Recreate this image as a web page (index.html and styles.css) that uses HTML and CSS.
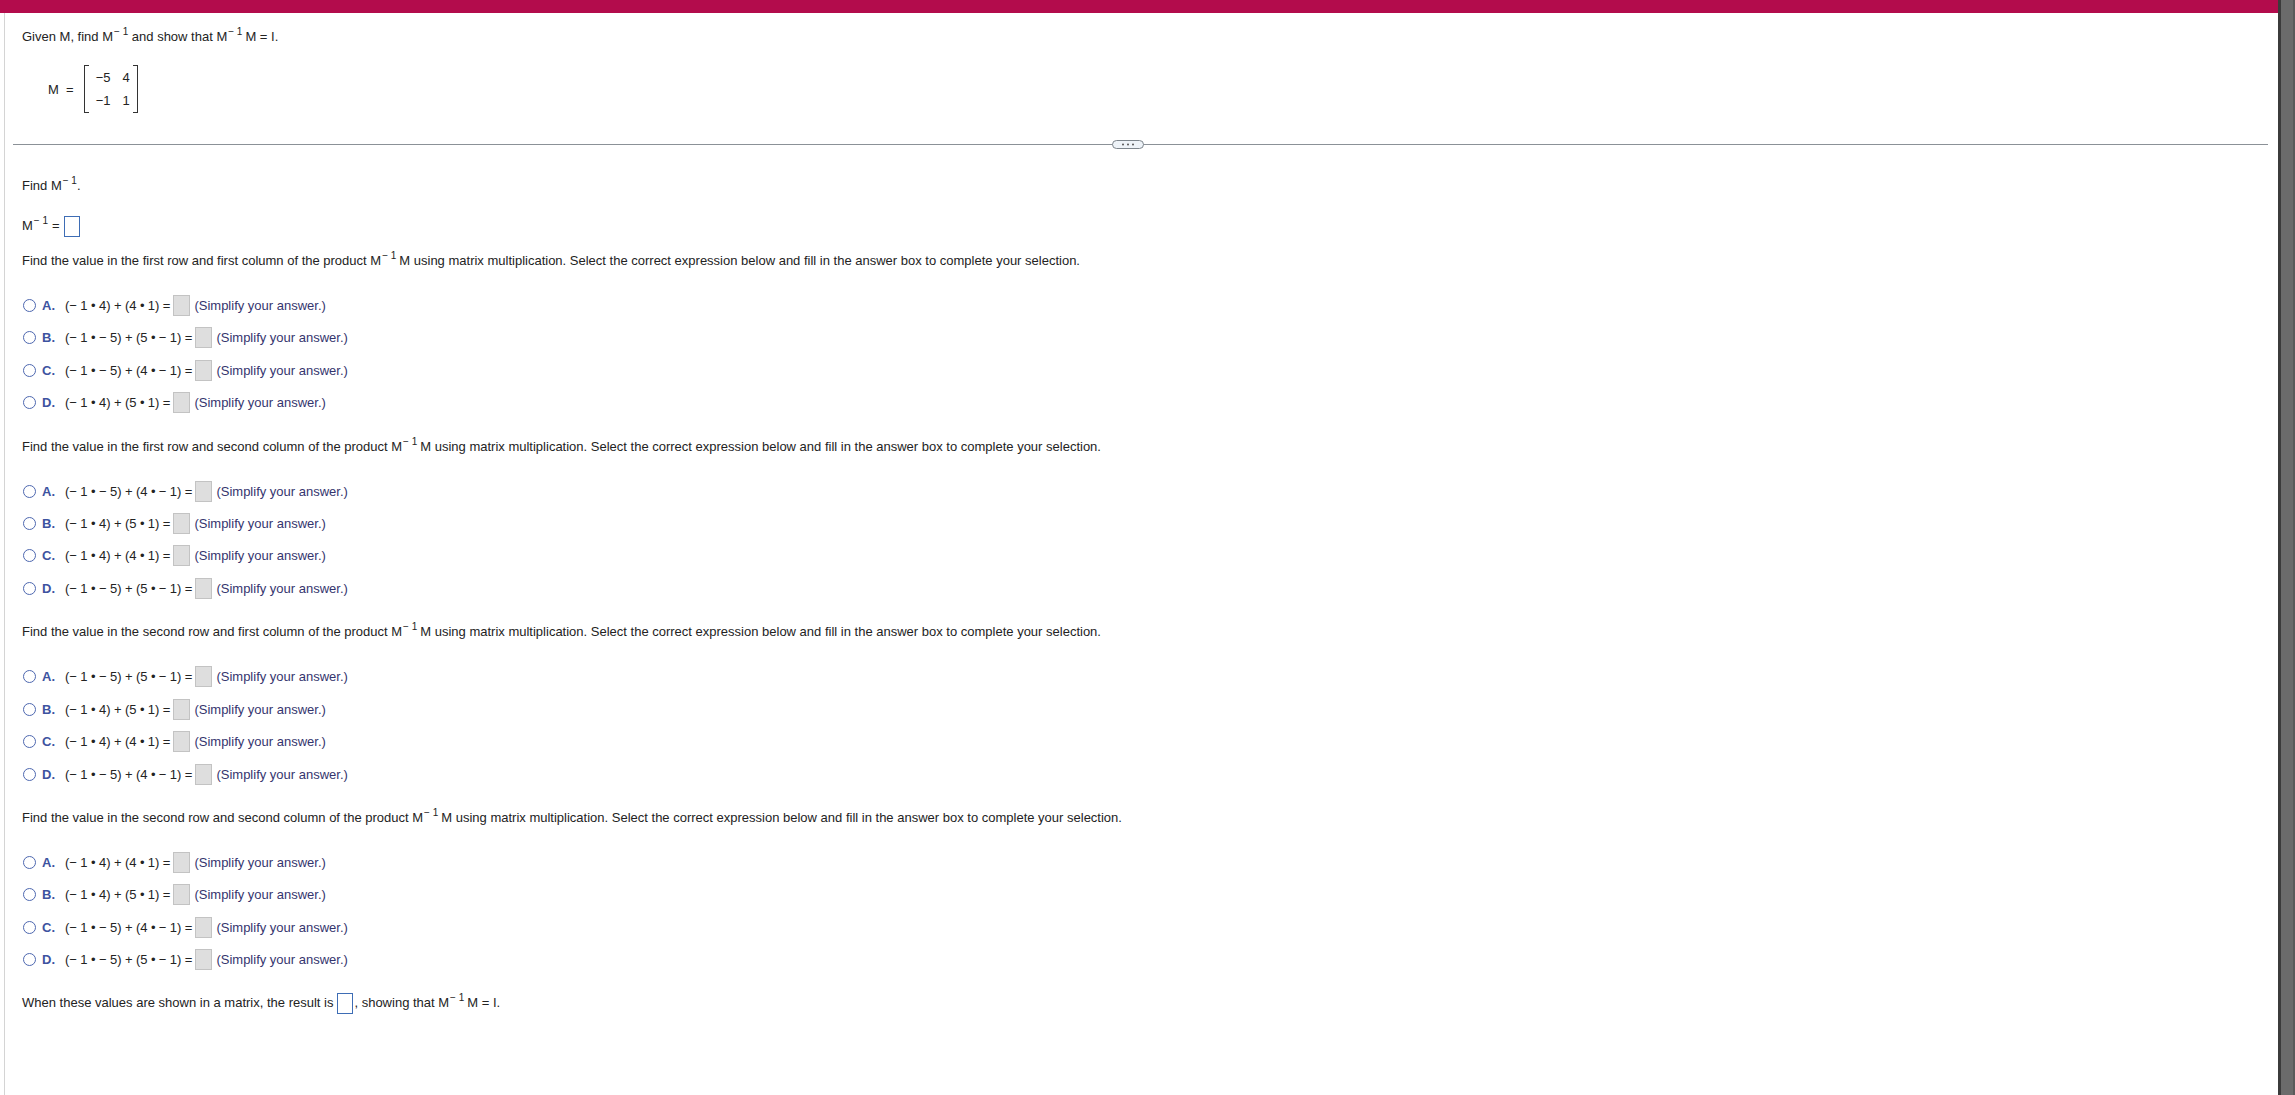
FILE: index.html
```html
<!DOCTYPE html>
<html>
<head>
    <meta charset="UTF-8">
    <title>Inverse of a Matrix</title>
    <link rel="stylesheet" href="styles.css">
</head>
<body>
    <div class="page">
        <div class="main">
            <div class="topbar"></div>
            <div class="content">
                <!-- Question stem -->
                <div class="stem">
                    <div class="lead">Given M, find M<span class="inv">&minus; 1</span> and show that M<span class="inv">&minus; 1</span><span class="after">M = I.</span></div>
                    <div class="matrix-line">
                        <span class="matrix-name">M&nbsp;&nbsp;=</span>
                        <div class="matrix">
                            <span>&minus;5</span><span>4</span>
                            <span>&minus;1</span><span>1</span>
                        </div>
                    </div>
                </div>

                <div class="divider">
                    <div class="more">
                        <svg width="14" height="3" viewBox="0 0 14 3"><circle cx="2" cy="1.5" r="1" fill="#555"/><circle cx="7" cy="1.5" r="1" fill="#555"/><circle cx="12" cy="1.5" r="1" fill="#555"/></svg>
                    </div>
                </div>

                <div class="work">
                    <div class="find">Find M<span class="inv">&minus; 1</span>.</div>
                    <div class="inverse-row">M<span class="inv">&minus; 1</span><span class="eq">=</span><span class="box-blue"></span></div>

                    <!-- Part 1 -->
                    <div class="part">
                        <div class="prompt">Find the value in the first row and first column of the product M<span class="inv">&minus; 1</span><span class="after">M</span> using matrix multiplication. Select the correct expression below and fill in the answer box to complete your selection.</div>
                        <div class="choices">
                            <div class="choice"><span class="radio"></span><span class="letter">A.</span><span class="expr">(&minus; 1 &bull; 4) + (4 &bull; 1) =</span><span class="blank"></span><span class="hint">(Simplify your answer.)</span></div>
                            <div class="choice"><span class="radio"></span><span class="letter">B.</span><span class="expr">(&minus; 1 &bull; &minus; 5) + (5 &bull; &minus; 1) =</span><span class="blank"></span><span class="hint">(Simplify your answer.)</span></div>
                            <div class="choice"><span class="radio"></span><span class="letter">C.</span><span class="expr">(&minus; 1 &bull; &minus; 5) + (4 &bull; &minus; 1) =</span><span class="blank"></span><span class="hint">(Simplify your answer.)</span></div>
                            <div class="choice"><span class="radio"></span><span class="letter">D.</span><span class="expr">(&minus; 1 &bull; 4) + (5 &bull; 1) =</span><span class="blank"></span><span class="hint">(Simplify your answer.)</span></div>
                        </div>
                    </div>

                    <!-- Part 2 -->
                    <div class="part">
                        <div class="prompt">Find the value in the first row and second column of the product M<span class="inv">&minus; 1</span><span class="after">M</span> using matrix multiplication. Select the correct expression below and fill in the answer box to complete your selection.</div>
                        <div class="choices">
                            <div class="choice"><span class="radio"></span><span class="letter">A.</span><span class="expr">(&minus; 1 &bull; &minus; 5) + (4 &bull; &minus; 1) =</span><span class="blank"></span><span class="hint">(Simplify your answer.)</span></div>
                            <div class="choice"><span class="radio"></span><span class="letter">B.</span><span class="expr">(&minus; 1 &bull; 4) + (5 &bull; 1) =</span><span class="blank"></span><span class="hint">(Simplify your answer.)</span></div>
                            <div class="choice"><span class="radio"></span><span class="letter">C.</span><span class="expr">(&minus; 1 &bull; 4) + (4 &bull; 1) =</span><span class="blank"></span><span class="hint">(Simplify your answer.)</span></div>
                            <div class="choice"><span class="radio"></span><span class="letter">D.</span><span class="expr">(&minus; 1 &bull; &minus; 5) + (5 &bull; &minus; 1) =</span><span class="blank"></span><span class="hint">(Simplify your answer.)</span></div>
                        </div>
                    </div>

                    <!-- Part 3 -->
                    <div class="part">
                        <div class="prompt">Find the value in the second row and first column of the product M<span class="inv">&minus; 1</span><span class="after">M</span> using matrix multiplication. Select the correct expression below and fill in the answer box to complete your selection.</div>
                        <div class="choices">
                            <div class="choice"><span class="radio"></span><span class="letter">A.</span><span class="expr">(&minus; 1 &bull; &minus; 5) + (5 &bull; &minus; 1) =</span><span class="blank"></span><span class="hint">(Simplify your answer.)</span></div>
                            <div class="choice"><span class="radio"></span><span class="letter">B.</span><span class="expr">(&minus; 1 &bull; 4) + (5 &bull; 1) =</span><span class="blank"></span><span class="hint">(Simplify your answer.)</span></div>
                            <div class="choice"><span class="radio"></span><span class="letter">C.</span><span class="expr">(&minus; 1 &bull; 4) + (4 &bull; 1) =</span><span class="blank"></span><span class="hint">(Simplify your answer.)</span></div>
                            <div class="choice"><span class="radio"></span><span class="letter">D.</span><span class="expr">(&minus; 1 &bull; &minus; 5) + (4 &bull; &minus; 1) =</span><span class="blank"></span><span class="hint">(Simplify your answer.)</span></div>
                        </div>
                    </div>

                    <!-- Part 4 -->
                    <div class="part">
                        <div class="prompt">Find the value in the second row and second column of the product M<span class="inv">&minus; 1</span><span class="after">M</span> using matrix multiplication. Select the correct expression below and fill in the answer box to complete your selection.</div>
                        <div class="choices">
                            <div class="choice"><span class="radio"></span><span class="letter">A.</span><span class="expr">(&minus; 1 &bull; 4) + (4 &bull; 1) =</span><span class="blank"></span><span class="hint">(Simplify your answer.)</span></div>
                            <div class="choice"><span class="radio"></span><span class="letter">B.</span><span class="expr">(&minus; 1 &bull; 4) + (5 &bull; 1) =</span><span class="blank"></span><span class="hint">(Simplify your answer.)</span></div>
                            <div class="choice"><span class="radio"></span><span class="letter">C.</span><span class="expr">(&minus; 1 &bull; &minus; 5) + (4 &bull; &minus; 1) =</span><span class="blank"></span><span class="hint">(Simplify your answer.)</span></div>
                            <div class="choice"><span class="radio"></span><span class="letter">D.</span><span class="expr">(&minus; 1 &bull; &minus; 5) + (5 &bull; &minus; 1) =</span><span class="blank"></span><span class="hint">(Simplify your answer.)</span></div>
                        </div>
                    </div>

                    <div class="result">When these values are shown in a matrix, the result is<span class="box-blue"></span>, showing that M<span class="inv">&minus; 1</span><span class="after">M = I.</span></div>
                </div>
            </div>
        </div>
        <div class="scrollbar"></div>
    </div>
</body>
</html>
```

FILE: styles.css
```css
/* --- question page --- */
html, body {
    margin: 0;
    padding: 0;
    height: 100%;
    overflow: hidden;
}

body {
    font-family: "Liberation Sans", Arial, sans-serif;
    font-size: 13px;
    color: #232323;
    background: #ffffff;
}

.page {
    display: flex;
    height: 100vh;
}

.main {
    flex: 1;
    display: flex;
    flex-direction: column;
}

.topbar {
    height: 13px;
    background-color: #b30c4c;
}

.content {
    flex: 1;
    margin-left: 4px;
    border-left: 1px solid #d4d4d4;
}

/* Fake window scrollbar on the right */
.scrollbar {
    width: 17px;
    box-sizing: border-box;
    background-color: #6b6b6b;
    border-left: 3px solid #3b3b3b;
    border-right: 2px solid #5a5a5a;
}

/* superscript -1 */
.inv {
    font-size: 10px;
    line-height: 0;
    vertical-align: 6px;
    margin-left: 1px;
}

.after {
    margin-left: 3px;
}

.stem {
    padding: 16px 17px 0;
}

.lead {
    line-height: 16px;
}

.matrix-line {
    display: flex;
    align-items: center;
    margin-top: 20px;
    padding-left: 26px;
}

.matrix-name {
    margin-right: 10px;
}

.matrix {
    position: relative;
    display: grid;
    grid-template-columns: auto auto;
    column-gap: 12px;
    justify-items: end;
    padding: 1px 8px 1px 12px;
    line-height: 23px;
}

.matrix::before,
.matrix::after {
    content: "";
    position: absolute;
    top: 0;
    bottom: 0;
    width: 4px;
    border: 1px solid #333;
}

.matrix::before {
    left: 0;
    border-right: none;
}

.matrix::after {
    right: 0;
    border-left: none;
}

.divider {
    position: relative;
    height: 1px;
    margin: 31px 10px 0 8px;
    background-color: #8b9197;
}

.more {
    position: absolute;
    left: 1099px;
    top: -4px;
    width: 32px;
    height: 9px;
    box-sizing: border-box;
    border: 1px solid #7d858c;
    border-radius: 5px;
    background-color: #eef3f8;
    display: flex;
    justify-content: center;
    align-items: center;
}

.more svg {
    display: block;
}

.work {
    padding: 0 17px;
}

.find {
    margin-top: 33px;
    line-height: 16px;
}

.inverse-row {
    height: 22px;
    line-height: 22px;
    margin-top: 21px;
}

.eq {
    margin: 0 4px 0 4px;
}

.box-blue {
    display: inline-block;
    width: 16px;
    height: 21px;
    box-sizing: border-box;
    vertical-align: middle;
    border: 1px solid #3e6db5;
    background-color: #fff;
}

.part {
    margin-top: 25px;
}

.inverse-row + .part {
    margin-top: 16px;
}

.prompt {
    line-height: 16px;
}

.choices {
    display: flex;
    flex-direction: column;
    gap: 10.4px;
    margin-top: 25.5px;
}

.choice {
    display: flex;
    align-items: center;
    height: 22px;
}

.radio {
    width: 13px;
    height: 13px;
    box-sizing: border-box;
    margin-left: 1px;
    border: 1px solid #4e68b0;
    border-radius: 50%;
}

.letter {
    width: 23px;
    margin-left: 6px;
    font-weight: bold;
    color: #3d53a0;
}

.expr {
    white-space: pre;
    word-spacing: -0.2px;
}

.blank {
    width: 17px;
    height: 21px;
    box-sizing: border-box;
    margin: 0 4px 0 3px;
    border: 1px solid #c3c3c3;
    background-color: #dedede;
}

.hint {
    color: #35356e;
}

.result {
    height: 22px;
    line-height: 22px;
    margin-top: 21px;
    white-space: pre;
}

.result .box-blue {
    margin: 0 1px 0 4px;
}
```
